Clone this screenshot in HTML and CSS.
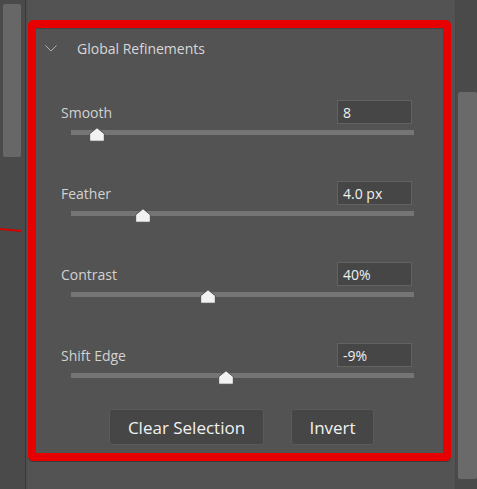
FILE: index.html
```html
<!DOCTYPE html>
<html lang="en">
<head>
  <meta charset="UTF-8">
  <meta name="viewport" content="width=device-width, initial-scale=1.0">
  <title>Global Refinements</title>
  <link rel="stylesheet" href="styles.css">
</head>
<body>
  <div class="app">
    <aside class="rail rail-left">
      <div class="rail-thumb"></div>
      <span class="mark"></span>
    </aside>
    <div class="divider"></div>
    <main class="panel">
      <section class="refine">
        <header class="refine-head">
          <svg class="chevron" viewBox="0 0 12 7">
            <polyline points="0.5,0.5 6,6 11.5,0.5" />
          </svg>
          <h2>Global Refinements</h2>
        </header>

        <div class="field">
          <div class="field-top">
            <label for="smooth">Smooth</label>
            <input type="text" id="smooth" value="8">
          </div>
          <div class="track"><span class="thumb" style="left: 7.6%"><svg viewBox="0 0 16 15"><path d="M8 0.8 L15.3 6.8 V14.2 H0.7 V6.8 Z" /></svg></span></div>
        </div>

        <div class="field">
          <div class="field-top">
            <label for="feather">Feather</label>
            <input type="text" id="feather" value="4.0 px">
          </div>
          <div class="track"><span class="thumb" style="left: 21%"><svg viewBox="0 0 16 15"><path d="M8 0.8 L15.3 6.8 V14.2 H0.7 V6.8 Z" /></svg></span></div>
        </div>

        <div class="field">
          <div class="field-top">
            <label for="contrast">Contrast</label>
            <input type="text" id="contrast" value="40%">
          </div>
          <div class="track"><span class="thumb" style="left: 40%"><svg viewBox="0 0 16 15"><path d="M8 0.8 L15.3 6.8 V14.2 H0.7 V6.8 Z" /></svg></span></div>
        </div>

        <div class="field">
          <div class="field-top">
            <label for="shift">Shift Edge</label>
            <input type="text" id="shift" value="-9%">
          </div>
          <div class="track"><span class="thumb" style="left: 45.3%"><svg viewBox="0 0 16 15"><path d="M8 0.8 L15.3 6.8 V14.2 H0.7 V6.8 Z" /></svg></span></div>
        </div>

        <div class="actions">
          <button class="btn btn-clear">Clear Selection</button>
          <button class="btn btn-invert">Invert</button>
        </div>
      </section>
    </main>
    <aside class="rail rail-right">
      <div class="rail-thumb"></div>
    </aside>
  </div>
</body>
</html>
```

FILE: styles.css
```css
body {
  margin: 0;
  background-color: #4a4a4a;
  font-family: "Open Sans", "Noto Sans", sans-serif;
  color: #d4d4d4;
  overflow: hidden;
}
.app {
  display: flex;
  width: 477px;
  height: 489px;
}
.rail {
  position: relative;
  background-color: #4a4a4a;
}
.rail-left {
  width: 25px;
}
.rail-left .rail-thumb {
  margin: 4px 0 0 3px;
  width: 18px;
  height: 153px;
  background-color: #676767;
  border-radius: 2px;
}
.mark {
  position: absolute;
  left: 0;
  top: 229px;
  width: 21px;
  height: 2px;
  background-color: #d40000;
  transform: rotate(5deg);
}
.divider {
  width: 1px;
  background-color: #393939;
  border-right: 2px solid #4f4f4f;
}
.panel {
  width: 427px;
  background-color: #535353;
  padding-top: 20px;
}
.refine {
  box-sizing: border-box;
  width: 423px;
  height: 441px;
  border: 8px solid #e60000;
  border-radius: 5px;
  box-shadow: 0 1px 0 #3a3a3a, inset 0 1px 0 #444;
}
.refine-head {
  display: flex;
  align-items: center;
  height: 20px;
  padding-top: 10px;
}
.chevron {
  width: 12px;
  height: 7px;
  margin-left: 9px;
  fill: none;
  stroke: #b0b0b0;
  stroke-width: 1;
}
.refine-head h2 {
  margin: 0 0 0 20px;
  font-size: 14px;
  font-weight: normal;
  color: #d8d8d8;
}
.field {
  padding: 0 29px 0 25px;
}
.field:first-of-type {
  margin-top: 42px;
}
.field + .field {
  margin-top: 46px;
}
.field-top {
  display: flex;
  justify-content: space-between;
  align-items: center;
  height: 24px;
}
.field-top label {
  font-size: 14px;
  color: #d2d2d2;
}
.field-top input {
  box-sizing: border-box;
  width: 75px;
  height: 24px;
  margin-right: 2px;
  padding: 0 5px;
  border: 1px solid #626262;
  background-color: #464646;
  color: #f0f0f0;
  font-family: "Open Sans", "Noto Sans", sans-serif;
  font-size: 14px;
  outline: none;
}
.track {
  position: relative;
  height: 5px;
  margin: 6px 0 0 10px;
  background-color: #757575;
}
.thumb {
  position: absolute;
  top: -3px;
  width: 16px;
  height: 15px;
  transform: translateX(-50%);
}
.thumb svg {
  display: block;
  width: 16px;
  height: 15px;
  fill: #f2f2f2;
  stroke: #3c3c3c;
  stroke-width: 0.8;
  stroke-linejoin: round;
}
.actions {
  display: flex;
  gap: 27px;
  margin-top: 31px;
  padding-left: 73px;
}
.btn {
  box-sizing: border-box;
  height: 36px;
  border: 1px solid #5a5a5a;
  border-radius: 3px;
  background-color: #464646;
  color: #f2f2f2;
  font-family: "Open Sans", "Noto Sans", sans-serif;
  font-size: 17px;
  cursor: pointer;
}
.btn-clear {
  width: 155px;
}
.btn-invert {
  width: 83px;
}
.rail-right {
  width: 22px;
  border-left: 1px solid #484848;
  box-sizing: border-box;
}
.rail-right .rail-thumb {
  margin: 92px 0 0 2px;
  width: 19px;
  height: 387px;
  background-color: #6a6a6a;
  border-radius: 2px;
}
```
